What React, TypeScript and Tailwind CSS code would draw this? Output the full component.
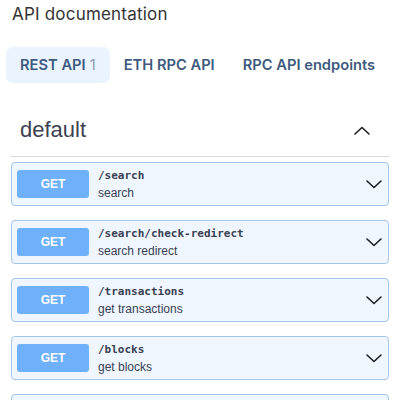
const ops = [
  { path: "/search", summary: "search" },
  { path: "/search/check-redirect", summary: "search redirect" },
  { path: "/transactions", summary: "get transactions" },
  { path: "/blocks", summary: "get blocks" },
  { path: "/blocks/{height}", summary: "get block" },
];

const tabs = [
  { label: "REST API", count: "1", active: true },
  { label: "ETH RPC API", active: false },
  { label: "RPC API endpoints", active: false },
];

const Chevron = ({ up }: { up?: boolean }) => (
  <svg width="16" height="9" viewBox="0 0 16 9" fill="none">
    <polyline
      points={up ? "1,8 8,1.5 15,8" : "1,1 8,7.5 15,1"}
      stroke="#1f1f1f"
      strokeWidth="1.6"
      strokeLinecap="round"
      strokeLinejoin="round"
    />
  </svg>
);

export default function App() {
  return (
    <div className="w-[400px] h-[400px] overflow-hidden bg-white">
      {/* Title */}
      <div className="mt-[2px] pl-[12px] text-[17px] leading-[24px] tracking-[0.2px] text-[#333] font-['Inter',sans-serif]">
        API documentation
      </div>

      {/* Tabs */}
      <div className="mt-[21px] ml-[6px] flex font-['Inter',sans-serif]">
        {tabs.map((t) => (
          <div
            key={t.label}
            className={`h-[36px] px-[14px] rounded-[7px] text-[14.7px] leading-[36px] font-semibold text-[#3e5a7e] ${
              t.active ? "bg-[#e9f4fe]" : ""
            }`}
          >
            {t.label}
            {t.count && <span className="ml-[4px] font-normal text-[#8b9ab0]">{t.count}</span>}
          </div>
        ))}
      </div>

      {/* Section */}
      <div className="mx-[11px] mt-[32px] font-['Liberation_Sans',Arial,sans-serif]">
        <div className="flex items-center justify-between pl-[9px] pr-[19px] pb-[11px] border-b border-[#d9d9d9]">
          <span className="text-[22px] leading-[30px] text-[#3b4151]">default</span>
          <Chevron up />
        </div>

        <div className="mt-[5px] flex flex-col gap-[14px]">
          {ops.map((op) => (
            <div
              key={op.path}
              className="h-[44px] shrink-0 flex items-center pl-[5px] pr-[6px] rounded-[4px] border border-[#a5c6ec] bg-[#eff6ff]"
            >
              <div className="w-[72px] h-[28px] rounded-[3px] bg-[#6fb0fb] flex items-center justify-center text-white text-[12px] font-bold">
                GET
              </div>
              <div className="ml-[9px] flex-1 flex flex-col">
                <span className="text-[11px] leading-[14px] font-bold text-[#3b4151] font-['DejaVu_Sans_Mono',monospace]">
                  {op.path}
                </span>
                <span className="mt-[3px] text-[12px] leading-[14px] text-[#3b4151]">{op.summary}</span>
              </div>
              <Chevron />
            </div>
          ))}
        </div>
      </div>
    </div>
  );
}
